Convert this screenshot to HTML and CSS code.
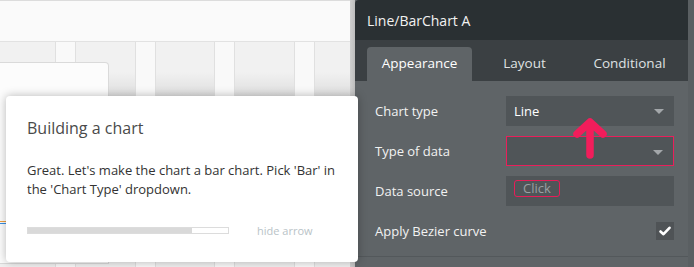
FILE: index.html
```html
<!DOCTYPE html>
<html lang="en">
<head>
    <meta charset="UTF-8">
    <title>Line/BarChart A</title>
    <link rel="stylesheet" href="styles.css">
</head>
<body>
    <div class="canvas">
        <div class="canvas-header"></div>
        <div class="canvas-columns">
            <div class="col"></div>
            <div class="col-gap"></div>
            <div class="col"></div>
            <div class="col-gap"></div>
            <div class="col"></div>
            <div class="col-gap"></div>
            <div class="col"></div>
            <div class="col-gap"></div>
            <div class="col"></div>
        </div>
        <div class="card">
            <div class="chart-line"></div>
        </div>
    </div>
    <div class="panel-shadow"></div>

    <div class="panel">
        <div class="panel-header">Line/BarChart A</div>
        <div class="tabs">
            <div class="tab active">Appearance</div>
            <div class="tab">Layout</div>
            <div class="tab">Conditional</div>
        </div>
        <div class="panel-body">
            <div class="row">
                <label>Chart type</label>
                <div class="field">Line<span class="caret"></span></div>
            </div>
            <div class="row">
                <label>Type of data</label>
                <div class="field highlight"><span class="caret"></span></div>
            </div>
            <div class="row">
                <label>Data source</label>
                <div class="field"><span class="pill">Click</span></div>
            </div>
            <div class="row">
                <label>Apply Bezier curve</label>
                <div class="checkbox">
                    <svg width="12" height="10" viewBox="0 0 12 10">
                        <path d="M1.5 5.5 L4.5 8.2 L10.5 1.8" fill="none" stroke="#fff" stroke-width="2.6" stroke-linecap="round" stroke-linejoin="round"/>
                    </svg>
                </div>
            </div>
        </div>
        <div class="panel-footer"></div>
    </div>

    <!-- tour arrow pointing at the chart type dropdown -->
    <svg class="tour-arrow" width="40" height="44" viewBox="0 0 40 44">
        <path d="M20 38 L20 6 M7 17 L20 5 L33 17" fill="none" stroke="#f21d5b" stroke-width="7.5" stroke-linecap="round" stroke-linejoin="round"/>
    </svg>

    <div class="tour-popup">
        <h2>Building a chart</h2>
        <p>Great. Let's make the chart a bar chart. Pick 'Bar' in the 'Chart Type' dropdown.</p>
        <div class="tour-footer">
            <div class="progress"><div class="progress-fill" style="width: 164px;"></div></div>
            <span class="hide-arrow">hide arrow</span>
        </div>
    </div>
</body>
</html>
```

FILE: styles.css
```css
body {
    margin: 0;
    width: 694px;
    height: 267px;
    overflow: hidden;
    display: flex;
    font-family: "Open Sans", "Noto Sans", sans-serif;
    background-color: #fafafa;
}

/* editor canvas behind the panel */
.canvas {
    position: relative;
    width: 350px;
    overflow: hidden;
    border-top: 1px solid #dcdcdc;
    display: flex;
    flex-direction: column;
}

.canvas-header {
    height: 40px;
    border-bottom: 1px solid #e2e2e2;
    background-color: #fafafa;
}

.canvas-columns {
    flex: 1;
    display: flex;
}

.col {
    width: 55px;
    background: linear-gradient(#f1f1f1 0, #f1f1f1 30px, #dedede 55px, #f0f0f0 70px);
}

.col ~ .col {
    width: 59px;
}

.col-gap {
    width: 19px;
    border-left: 1px solid #e0e0e0;
    border-right: 1px solid #e0e0e0;
    background-color: #f9f9f9;
}

.canvas .col:last-child {
    width: 35px;
}

.card {
    position: absolute;
    left: 0;
    top: 61px;
    width: 108px;
    height: 200px;
    background-color: #fcfcfc;
    border: 1px solid #dadada;
    border-left: none;
    border-top-right-radius: 4px;
}

.chart-line {
    margin-top: 158px;
    height: 1px;
    border-top: 1px solid #f0a040;
    border-bottom: 1px solid #3a8ee0;
}

.panel-shadow {
    width: 5px;
    background: linear-gradient(90deg, #d0d0d0, #bdbdbd);
}

/* property editor */
.panel {
    width: 339px;
    display: flex;
    flex-direction: column;
    background-color: #5f6467;
    color: #f2f2f2;
    border-right: 6px solid #5a5f62;
    box-sizing: border-box;
}

.panel-header {
    height: 40px;
    line-height: 42px;
    padding-left: 12px;
    background-color: #2a3033;
    font-size: 14px;
    border-top-left-radius: 4px;
}

.tabs {
    height: 41px;
    display: flex;
    align-items: flex-end;
    padding-left: 12px;
    background-color: #3b4043;
}

.tab {
    width: 105px;
    height: 34px;
    line-height: 33px;
    text-align: center;
    font-size: 13.5px;
    color: #dfe1e2;
    border-radius: 4px 4px 0 0;
}

.tab.active {
    background-color: #5f6467;
    color: #fff;
}

.panel-body {
    flex: 1;
    padding: 15px 14px 0 20px;
    display: flex;
    flex-direction: column;
    gap: 10px;
}

.row {
    height: 30px;
    display: flex;
    align-items: center;
    justify-content: space-between;
    font-size: 13px;
}

.field {
    position: relative;
    width: 168px;
    height: 30px;
    box-sizing: border-box;
    padding-left: 8px;
    line-height: 31px;
    background-color: #505558;
    color: #fff;
}

.field.highlight {
    border: 1px solid #ea1f5b;
}

.caret {
    position: absolute;
    right: 10px;
    top: 13px;
    border-left: 5px solid transparent;
    border-right: 5px solid transparent;
    border-top: 5px solid #a3a7aa;
}

.pill {
    display: inline-block;
    height: 15px;
    line-height: 15px;
    padding: 0 8px;
    border: 1px solid #e71d58;
    border-radius: 3px;
    color: #9aa0a3;
    vertical-align: 3px;
}

.checkbox {
    width: 18px;
    height: 18px;
    background-color: #4f5356;
    display: flex;
    align-items: center;
    justify-content: center;
}

.panel-footer {
    height: 10px;
    border-top: 1px solid #53585b;
}

.tour-arrow {
    position: absolute;
    left: 570px;
    top: 117px;
}

/* tour bubble */
.tour-popup {
    position: absolute;
    left: 6px;
    top: 96px;
    width: 331px;
    height: 166px;
    padding-left: 21px;
    background-color: #fff;
    border-radius: 4px;
    box-shadow: 0 0 10px rgba(0, 0, 0, 0.28);
    color: #444;
}

.tour-popup h2 {
    margin: 19px 0 0 0;
    font-size: 16px;
    font-weight: 400;
    line-height: 26px;
    color: #4a4a4a;
}

.tour-popup p {
    margin: 20px 0 0 0;
    font-size: 13px;
    line-height: 19px;
    width: 320px;
    color: #333;
}

.tour-footer {
    display: flex;
    align-items: center;
    margin-top: 24px;
}

.progress {
    width: 200px;
    height: 5px;
    border: 1px solid #dcdcdc;
    background-color: #fff;
}

.progress-fill {
    height: 5px;
    background-color: #d9d9d9;
}

.hide-arrow {
    margin-left: 28px;
    font-size: 11px;
    color: #b9c3c7;
}
```
